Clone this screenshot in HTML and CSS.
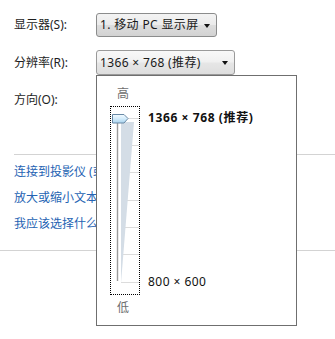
FILE: index.html
```html
<!DOCTYPE html>
<html lang="zh-CN">
<head>
<meta charset="utf-8">
<link rel="stylesheet" href="styles.css">
</head>
<body>
<div class="page">
  <div class="form">
    <div class="row row-display">
      <span class="label">显示器(S):</span>
      <div class="combo combo-display">
        <span class="combo-text">1. 移动 PC 显示屏</span>
        <span class="arrow"></span>
      </div>
    </div>
    <div class="row row-res">
      <span class="label">分辨率(R):</span>
      <div class="combo combo-res">
        <span class="combo-text">1366 × 768 (推荐)</span>
        <span class="arrow"></span>
      </div>
    </div>
    <div class="row row-orient">
      <span class="label">方向(O):</span>
    </div>
  </div>
  <div class="sep sep-inset"></div>
  <div class="links">
    <a class="link">连接到投影仪 (或按 Windows 徽标键 + P)</a>
    <a class="link">放大或缩小文本和其他项目</a>
    <a class="link">我应该选择什么显示器设置?</a>
  </div>
  <div class="sep sep-full"></div>

  <div class="popup">
    <div class="slider-grid">
      <span class="end-label high">高</span>
      <div class="slider-box">
        <svg width="28" height="187" viewBox="0 0 28 187">
          <defs>
            <linearGradient id="thumbfill" x1="0" y1="0" x2="0" y2="1">
              <stop offset="0" stop-color="#f4fbff"/>
              <stop offset="0.5" stop-color="#d3ecfb"/>
              <stop offset="1" stop-color="#a9d3ee"/>
            </linearGradient>
          </defs>
          <g stroke="#dcdcdc" stroke-width="1">
            <line x1="17" y1="11.5" x2="28" y2="11.5"/>
            <line x1="10" y1="38.5" x2="28" y2="38.5"/>
            <line x1="10" y1="65.5" x2="28" y2="65.5"/>
            <line x1="10" y1="93.5" x2="28" y2="93.5"/>
            <line x1="10" y1="120.5" x2="28" y2="120.5"/>
            <line x1="10" y1="147.5" x2="28" y2="147.5"/>
            <line x1="10" y1="175.5" x2="28" y2="175.5"/>
          </g>
          <polygon points="10,15 23,15 10,176" fill="#d4dde6"/>
          <line x1="6.5" y1="16" x2="6.5" y2="174" stroke="#9a9a9a" stroke-width="1.4"/>
          <polygon points="1.5,7.5 13,7.5 17,11.5 13,16 1.5,16" fill="url(#thumbfill)" stroke="#6a8aa6" stroke-width="1" stroke-linejoin="round"/>
        </svg>
      </div>
      <div class="res-labels">
        <span class="res res-top">1366 × 768 (推荐)</span>
        <span class="res">800 × 600</span>
      </div>
      <span class="end-label low">低</span>
    </div>
  </div>
</div>
</body>
</html>
```

FILE: styles.css
```css
html, body {
  margin: 0;
  padding: 0;
  background: #ffffff;
}

.page {
  position: relative;
  width: 335px;
  height: 339px;
  overflow: hidden;
  font-family: "Noto Sans", "Noto Sans CJK SC", sans-serif;
  font-size: 12px;
  color: #1e1e1e;
}

.form {
  padding: 13px 0 0 14px;
}

.row {
  display: flex;
  align-items: center;
}

.label {
  width: 82px;
  line-height: 16px;
}

.row-display {
  height: 24px;
}

.row-res {
  height: 25px;
  margin-top: 13px;
}

.row-orient {
  height: 24px;
  margin-top: 13px;
}

.combo {
  box-sizing: border-box;
  height: 100%;
  display: flex;
  align-items: center;
  justify-content: space-between;
  padding: 0 6px 0 3px;
  border: 1px solid #8b8c8c;
  border-radius: 3px;
  background: linear-gradient(#f3f3f3 0%, #ebebeb 48%, #dddddd 52%, #d2d2d2 100%);
  color: #1a1a1a;
}

.combo-display {
  width: 121px;
}

.combo-res {
  width: 139px;
  border-color: #9a9a9a;
  background: linear-gradient(#f8f8f8 0%, #f0f0f0 48%, #e6e6e6 52%, #dedede 100%);
}

.combo-text {
  line-height: 16px;
  white-space: nowrap;
  letter-spacing: 0.35px;
}

.arrow {
  width: 0;
  height: 0;
  border-left: 3.5px solid transparent;
  border-right: 3.5px solid transparent;
  border-top: 4px solid #111111;
  margin-top: 1px;
}

.sep {
  height: 0;
  border-top: 1px solid #d3d3d3;
}

.sep-inset {
  margin: 42px 0 0 14px;
}

.sep-full {
  margin-top: 13px;
}

.links {
  display: flex;
  flex-direction: column;
  padding: 4px 0 0 14px;
}

.link {
  line-height: 26px;
  height: 26px;
  color: #2563b3;
  white-space: nowrap;
  text-decoration: none;
}

.popup {
  position: absolute;
  left: 96px;
  top: 75px;
  width: 199px;
  height: 249px;
  border: 1px solid #6f6f6f;
  background: #ffffff;
}

.slider-grid {
  display: grid;
  grid-template-columns: 30px auto;
  grid-template-rows: 16px 189px 16px;
  row-gap: 4px;
  column-gap: 8px;
  padding: 10px 0 0 13px;
}

.end-label {
  grid-column: 1;
  line-height: 16px;
  padding-left: 7px;
  color: #6e6e6e;
}

.high {
  grid-row: 1;
}

.low {
  grid-row: 3;
  margin-top: 1px;
}

.slider-box {
  grid-column: 1;
  grid-row: 2;
  border: 1px dotted #000000;
  width: 28px;
  height: 187px;
}

.slider-box svg {
  display: block;
}

.res-labels {
  grid-column: 2;
  grid-row: 2;
  display: flex;
  flex-direction: column;
  justify-content: space-between;
  padding: 4px 0 5px 0;
}

.res {
  line-height: 16px;
  white-space: nowrap;
  color: #111111;
  letter-spacing: 0.45px;
}

.res-top {
  font-weight: bold;
  letter-spacing: 0.6px;
}
```
